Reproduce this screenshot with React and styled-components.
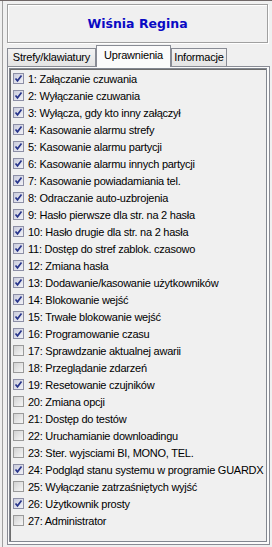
import styled, { createGlobalStyle } from "styled-components";

const GlobalStyle = createGlobalStyle`
  body {
    margin: 0;
    background: #f0f0f0;
    font-family: "Liberation Sans", Arial, sans-serif;
  }
`;

const permissions = [
  ["1: Załączanie czuwania", true],
  ["2: Wyłączanie czuwania", true],
  ["3: Wyłącza, gdy kto inny załączył", true],
  ["4: Kasowanie alarmu strefy", true],
  ["5: Kasowanie alarmu partycji", true],
  ["6: Kasowanie alarmu innych partycji", true],
  ["7: Kasowanie powiadamiania tel.", true],
  ["8: Odraczanie auto-uzbrojenia", true],
  ["9: Hasło pierwsze dla str. na 2 hasła", true],
  ["10: Hasło drugie dla str. na 2 hasła", true],
  ["11: Dostęp do stref zablok. czasowo", true],
  ["12: Zmiana hasła", true],
  ["13: Dodawanie/kasowanie użytkowników", true],
  ["14: Blokowanie wejść", true],
  ["15: Trwałe blokowanie wejść", true],
  ["16: Programowanie czasu", true],
  ["17: Sprawdzanie aktualnej awarii", false],
  ["18: Przeglądanie zdarzeń", false],
  ["19: Resetowanie czujników", true],
  ["20: Zmiana opcji", false],
  ["21: Dostęp do testów", false],
  ["22: Uruchamianie downloadingu", false],
  ["23: Ster. wyjsciami BI, MONO, TEL.", false],
  ["24: Podgląd stanu systemu w programie GUARDX", true],
  ["25: Wyłączanie zatrzaśniętych wyjść", false],
  ["26: Użytkownik prosty", true],
  ["27: Administrator", false],
];

const App = () => {
  return (
    <>
      <GlobalStyle />
      <Window>
        <Shell>
          <Title>Wiśnia Regina</Title>
          <TabStrip>
            <Tab $width={89}>Strefy/klawiatury</Tab>
            <Tab $width={75} $active>Uprawnienia</Tab>
            <Tab $width={56}>Informacje</Tab>
          </TabStrip>
          <Panel>
            <ListBox>
              {permissions.map(([label, checked]) => (
                <Row key={label}>
                  <CheckBox $checked={checked}>
                    {checked && (
                      <svg width="9" height="9" viewBox="0 0 9 9">
                        <path
                          d="M1.5 4.5 L3.5 6.8 L7.5 1.6"
                          fill="none"
                          stroke="#27348b"
                          strokeWidth="1.7"
                        />
                      </svg>
                    )}
                  </CheckBox>
                  <Label>{label}</Label>
                </Row>
              ))}
            </ListBox>
          </Panel>
        </Shell>
      </Window>
    </>
  );
};

const Window = styled.div`
  width: 272px;
  height: 547px;
  box-sizing: border-box;
  border-top: 1px solid #6f6767;
  padding-left: 2px;
  background: #f0f0f0;
`;

const Shell = styled.div`
  height: 100%;
  box-sizing: border-box;
  border-left: 1px solid #a0a0a0;
  padding: 3px 2px 2px 4px;
  display: flex;
  flex-direction: column;
`;

const Title = styled.div`
  height: 39px;
  margin-right: 2px;
  box-sizing: border-box;
  border: 1px solid #a0a0a0;
  box-shadow: inset 1px 1px 0 #fff, 1px 1px 0 #fff;
  display: flex;
  align-items: center;
  justify-content: center;
  font-family: "DejaVu Sans", Verdana, sans-serif;
  font-weight: bold;
  font-size: 12.5px;
  color: #0a0ac4;
`;

const TabStrip = styled.div`
  display: flex;
  align-items: flex-end;
  height: 21px;
  margin-top: 2px;
`;

const Tab = styled.div`
  width: ${(p) => p.$width}px;
  height: ${(p) => (p.$active ? 22 : 18)}px;
  box-sizing: border-box;
  margin-bottom: ${(p) => (p.$active ? -1 : 0)}px;
  border: 1px solid #898c95;
  border-bottom: none;
  background: ${(p) =>
    p.$active ? "#fbfbfb" : "linear-gradient(#f3f3f3, #e4e4e4)"};
  display: flex;
  justify-content: center;
  padding-top: ${(p) => (p.$active ? 3 : 2)}px;
  font-size: 11px;
  letter-spacing: -0.2px;
  color: #000;
  position: relative;
  z-index: ${(p) => (p.$active ? 1 : 0)};
`;

const Panel = styled.div`
  flex: 1;
  display: flex;
  border: 1px solid #898c95;
  background: #fbfbfb;
  padding: 1px 2px 2px 1px;
`;

const ListBox = styled.div`
  flex: 1;
  border: 1px solid #828790;
  box-shadow: inset 1px 1px 0 #6d6d6d;
  background: #f0f0f0;
  padding-top: 1px;
`;

const Row = styled.div`
  display: flex;
  align-items: center;
  height: 17px;
  padding-left: 3px;
`;

const CheckBox = styled.span`
  width: 11px;
  height: 11px;
  box-sizing: border-box;
  border: 1px solid ${(p) => (p.$checked ? "#8d8fa6" : "#9a9a9a")};
  background: ${(p) =>
    p.$checked
      ? "linear-gradient(135deg, #c9cbdc, #f2f2f7)"
      : "linear-gradient(135deg, #d2d2d2, #f6f6f6)"};
  display: flex;
  align-items: center;
  justify-content: center;
  margin-right: 4px;
  flex-shrink: 0;
`;

const Label = styled.span`
  font-size: 11px;
  letter-spacing: -0.25px;
  color: #000;
  white-space: nowrap;
`;

export default App;
